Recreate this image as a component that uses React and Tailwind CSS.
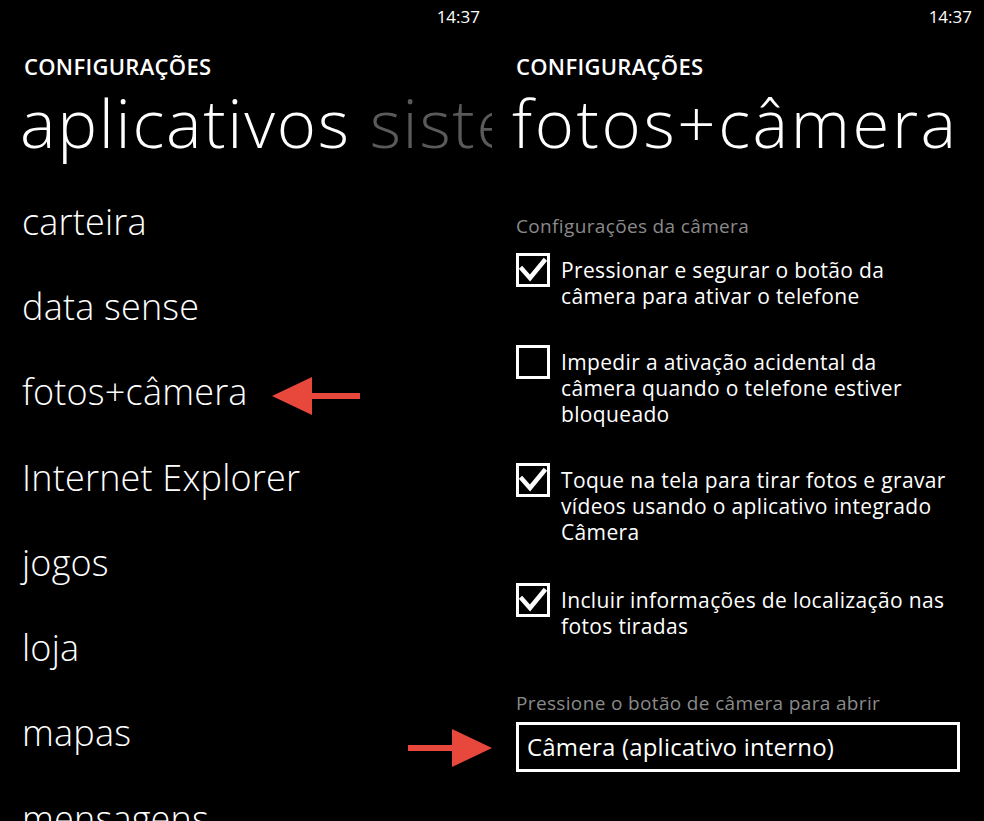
import React from "react";

const font = { fontFamily: '"Open Sans", "Noto Sans", sans-serif' };

function Check({ checked }) {
  return (
    <svg width="34" height="34" viewBox="0 0 34 34" className="shrink-0">
      <rect x="1.5" y="1.5" width="31" height="31" fill="none" stroke="#fff" strokeWidth="3" />
      {checked && (
        <polyline points="6,16 14,25 28,8" fill="none" stroke="#fff" strokeWidth="4.5" strokeLinecap="square" strokeLinejoin="miter" />
      )}
    </svg>
  );
}

function ArrowLeft() {
  return (
    <svg width="90" height="40" viewBox="0 0 90 40">
      <polygon points="0,20 40,1 40,17 88,17 88,23 40,23 40,39" fill="#e8483b" />
    </svg>
  );
}

function ArrowRight() {
  return (
    <svg width="84" height="42" viewBox="0 0 84 42">
      <polygon points="84,21 44,2 44,18 0,18 0,24 44,24 44,40" fill="#e8483b" />
    </svg>
  );
}

function CheckRow({ checked, lines, className }) {
  return (
    <div className={"flex items-start gap-[11px] pl-[24px] " + className}>
      <Check checked={checked} />
      <div className="pt-[4px] text-[21px] leading-[26px] tracking-[0.35px] text-white">
        {lines.map((l, i) => (
          <div key={i} className="whitespace-nowrap">{l}</div>
        ))}
      </div>
    </div>
  );
}

function Header({ title, tracking }) {
  return (
    <>
      <div className="h-[34px] flex justify-end items-center pr-[12px] text-[17px]">14:37</div>
      <div className="pl-[24px] mt-[19px] text-[22px] font-semibold leading-[26px] tracking-[0.3px]">CONFIGURAÇÕES</div>
      <div className={"pl-[20px] mt-[3px] text-[67px] font-light leading-[80px] whitespace-nowrap " + tracking}>{title}</div>
    </>
  );
}

export default function App() {
  const items = ["carteira", "data sense", "fotos+câmera", "Internet Explorer", "jogos", "loja", "mapas", "mensagens"];
  return (
    <div className="w-[984px] h-[821px] bg-black text-white flex overflow-hidden relative" style={font}>
      {/* Left panel */}
      <div className="w-[492px] h-full shrink-0 overflow-hidden">
        <Header
          tracking="tracking-[1.7px]"
          title={
            <>
              aplicativos <span className="text-[#5a5a5a]">sistema</span>
            </>
          }
        />
        <div className="mt-[17px]">
          {items.map((t) => (
            <div key={t} className="relative h-[85.3px] flex items-center pl-[22px] text-[36px] font-light whitespace-nowrap tracking-[0.2px]">
              {t}
              {t === "fotos+câmera" && (
                <span className="absolute left-[272px] top-[26px] flex">
                  <ArrowLeft />
                </span>
              )}
            </div>
          ))}
        </div>
      </div>

      {/* Right panel */}
      <div className="w-[492px] h-full shrink-0">
        <Header title="fotos+câmera" tracking="tracking-[2.6px]" />
        <div className="pl-[24px] mt-[52px] text-[19px] text-[#8a8a8a] leading-[24px] tracking-[0.35px]">Configurações da câmera</div>
        <CheckRow className="mt-[15px]" checked lines={["Pressionar e segurar o botão da", "câmera para ativar o telefone"]} />
        <CheckRow className="mt-[36px]" lines={["Impedir a ativação acidental da", "câmera quando o telefone estiver", "bloqueado"]} />
        <CheckRow className="mt-[36px]" checked lines={["Toque na tela para tirar fotos e gravar", "vídeos usando o aplicativo integrado", "Câmera"]} />
        <CheckRow className="mt-[38px]" checked lines={["Incluir informações de localização nas", "fotos tiradas"]} />
        <div className="pl-[24px] mt-[52px] text-[19px] text-[#8a8a8a] leading-[24px] tracking-[0.35px]">Pressione o botão de câmera para abrir</div>
        <div className="ml-[24px] mt-[7px] w-[444px] h-[50px] border-[3px] border-white flex items-center pl-[8px] text-[24px] tracking-[0.2px]">
          Câmera (aplicativo interno)
        </div>
      </div>

      <div className="absolute left-[408px] top-[727px]">
        <ArrowRight />
      </div>
    </div>
  );
}
